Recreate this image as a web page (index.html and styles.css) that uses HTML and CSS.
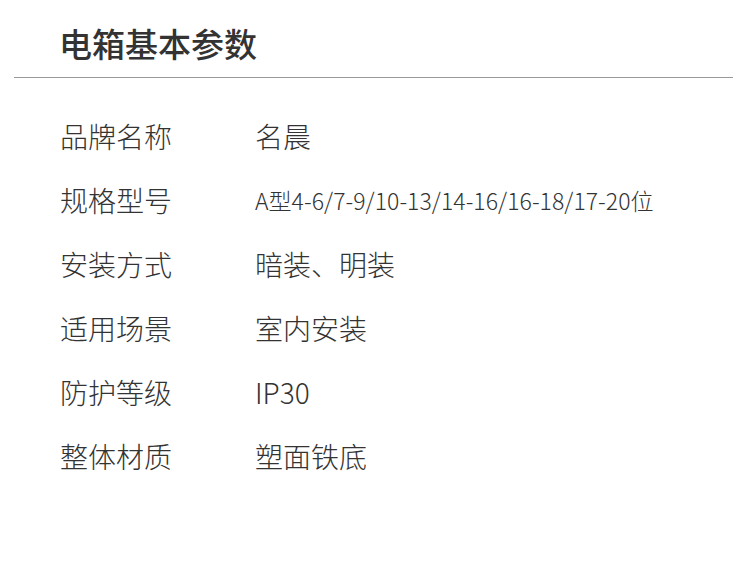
FILE: index.html
```html
<!DOCTYPE html>
<html lang="zh">
<head>
<meta charset="utf-8">
<title>电箱基本参数</title>
<link rel="stylesheet" href="styles.css">
</head>
<body>
<div class="page">
  <header class="head">
    <h1 class="title">电箱基本参数</h1>
  </header>
  <dl class="params">
    <div class="row"><dt>品牌名称</dt><dd>名晨</dd></div>
    <div class="row"><dt>规格型号</dt><dd class="small">A型4-6/7-9/10-13/14-16/16-18/17-20位</dd></div>
    <div class="row"><dt>安装方式</dt><dd>暗装、明装</dd></div>
    <div class="row"><dt>适用场景</dt><dd>室内安装</dd></div>
    <div class="row"><dt>防护等级</dt><dd>IP30</dd></div>
    <div class="row"><dt>整体材质</dt><dd>塑面铁底</dd></div>
  </dl>
</div>
</body>
</html>
```

FILE: styles.css
```css
html, body {
  margin: 0;
  padding: 0;
  background: #ffffff;
}
body {
  font-family: "Noto Sans CJK SC", "Noto Sans", sans-serif;
  color: #333333;
}
.page {
  width: 750px;
  height: 571px;
  overflow: hidden;
}
.head {
  margin: 0 17px 0 14px;
  border-bottom: 1px solid #999999;
  height: 77px;
  display: flex;
  align-items: center;
  padding-left: 45px;
}
.title {
  margin: 0;
  font-size: 33px;
  font-weight: 500;
  line-height: 1;
  color: #333333;
  padding-top: 10px;
}
.params {
  margin: 0;
  padding: 26px 0 0 60px;
}
.row {
  display: flex;
  align-items: center;
  height: 64px;
}
.row dt {
  width: 195px;
  font-size: 28px;
  font-weight: 300;
  line-height: 1;
  color: #333333;
}
.row dd {
  margin: 0;
  font-size: 28px;
  font-weight: 300;
  line-height: 1;
  color: #333333;
}
.row dd.small {
  font-size: 23px;
  letter-spacing: 0.05px;
}
```
